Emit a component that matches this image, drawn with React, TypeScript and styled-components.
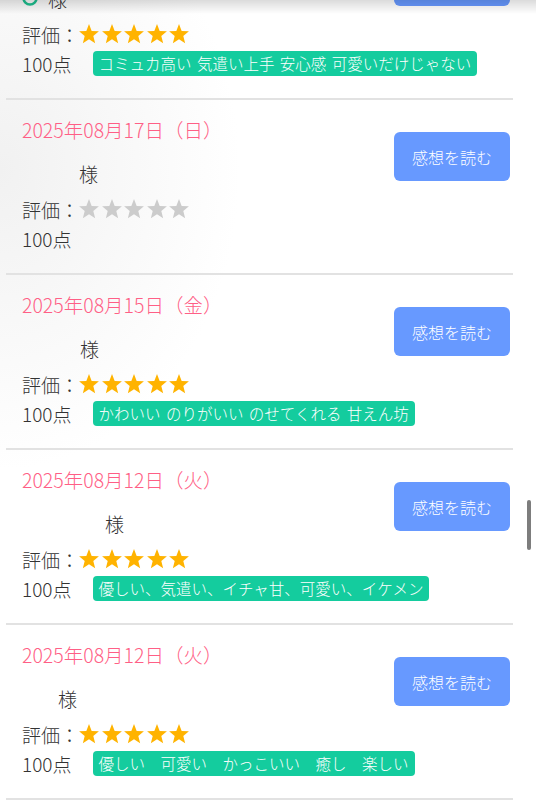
import React from "react";
import styled, { createGlobalStyle } from "styled-components";

const GlobalStyle = createGlobalStyle`
  html, body {
    margin: 0;
    padding: 0;
    overflow: hidden;
  }
  body {
    background: radial-gradient(ellipse 240px 300px at 0px 170px, #f1f1f1 0%, #f8f8f8 50%, #ffffff 100%);
    background-color: #ffffff;
    font-family: "Noto Sans CJK JP", "Noto Sans", sans-serif;
    font-weight: 300;
    color: #333333;
  }
`;

const TopShadow = styled.div`
  position: fixed;
  top: 0;
  left: 0;
  right: 0;
  height: 14px;
  background: linear-gradient(to bottom, rgba(0, 0, 0, 0.14), rgba(0, 0, 0, 0));
  pointer-events: none;
`;

const ScrollThumb = styled.div`
  position: fixed;
  top: 500px;
  left: 527px;
  width: 4px;
  height: 50px;
  border-radius: 2px;
  background: #7d7d7d;
`;

const List = styled.div`
  margin: -75px 23px 0 6px;
  display: flex;
  flex-direction: column;
`;

const Card = styled.div`
  display: flex;
  justify-content: space-between;
  align-items: flex-start;
  padding: 18px 3px 22px 16px;
  border-bottom: 2px solid #e2e2e2;
`;

const Info = styled.div`
  display: flex;
  flex-direction: column;
  min-width: 0;
`;

const DateRow = styled.div`
  height: 24px;
  line-height: 24px;
  font-size: 19.5px;
  color: #ff5f86;
  margin-bottom: 19px;
  white-space: nowrap;
`;

const NameRow = styled.div`
  display: flex;
  align-items: center;
  height: 24px;
  font-size: 19px;
  margin-bottom: 9px;
`;

const NameBlank = styled.span<{ $w: number }>`
  display: inline-flex;
  align-items: center;
  width: ${(p) => p.$w}px;
`;

const RatingRow = styled.div`
  display: flex;
  align-items: center;
  height: 30px;
  font-size: 19px;
  margin-bottom: 1px;
  white-space: nowrap;
`;

const Stars = styled.span`
  display: inline-flex;
  gap: 0.5px;
  margin-left: -1px;
`;

const ScoreRow = styled.div`
  display: flex;
  align-items: center;
  height: 26px;
  font-size: 19px;
  white-space: nowrap;
`;

const Tag = styled.span`
  display: inline-block;
  margin-left: 21px;
  padding: 0 6px;
  height: 25px;
  line-height: 25px;
  border-radius: 4px;
  background: #14cc9e;
  color: #ffffff;
  font-size: 15.5px;
  word-spacing: 2px;
  white-space: pre;
`;

const ReadButton = styled.button`
  flex-shrink: 0;
  margin-top: 14px;
  width: 116px;
  height: 49px;
  border: none;
  border-radius: 6px;
  background: #6799ff;
  color: #ffffff;
  font-family: "Noto Sans CJK JP", sans-serif;
  font-weight: 300;
  font-size: 16px;
  cursor: pointer;
`;

function Star({ on }: { on: boolean }) {
  return (
    <svg width="22" height="22" viewBox="0 0 24 24">
      <polygon
        points="12,1.2 14.9,8.6 22.8,9.1 16.7,14.2 18.7,22 12,17.6 5.3,22 7.3,14.2 1.2,9.1 9.1,8.6"
        fill={on ? "#ffb300" : "#cccccc"}
      />
    </svg>
  );
}

function Ring() {
  return (
    <svg width="16" height="16" viewBox="0 0 16 16">
      <circle cx="8" cy="8" r="6.5" fill="none" stroke="#1fbf8f" strokeWidth="2.6" />
    </svg>
  );
}

type Review = {
  date: string;
  blank: number;
  ring?: boolean;
  stars: number;
  tag?: string;
};

const reviews: Review[] = [
  { date: "2025年08月20日（水）", blank: 26, ring: true, stars: 5, tag: "コミュカ高い 気遣い上手 安心感 可愛いだけじゃない" },
  { date: "2025年08月17日（日）", blank: 57, stars: 0 },
  { date: "2025年08月15日（金）", blank: 58, stars: 5, tag: "かわいい のりがいい のせてくれる 甘えん坊" },
  { date: "2025年08月12日（火）", blank: 83, stars: 5, tag: "優しい、気遣い、イチャ甘、可愛い、イケメン" },
  { date: "2025年08月12日（火）", blank: 36, stars: 5, tag: "優しい　可愛い　かっこいい　癒し　楽しい" },
];

export default function App() {
  return (
    <>
      <GlobalStyle />
      <List>
        {reviews.map((r, i) => (
          <Card key={i}>
            <Info>
              <DateRow>{r.date}</DateRow>
              <NameRow>
                <NameBlank $w={r.blank}>{r.ring && <Ring />}</NameBlank>
                様
              </NameRow>
              <RatingRow>
                評価：
                <Stars>
                  {[0, 1, 2, 3, 4].map((s) => (
                    <Star key={s} on={s < r.stars} />
                  ))}
                </Stars>
              </RatingRow>
              <ScoreRow>
                100点
                {r.tag && <Tag>{r.tag}</Tag>}
              </ScoreRow>
            </Info>
            <ReadButton>感想を読む</ReadButton>
          </Card>
        ))}
      </List>
      <TopShadow />
      <ScrollThumb />
    </>
  );
}
